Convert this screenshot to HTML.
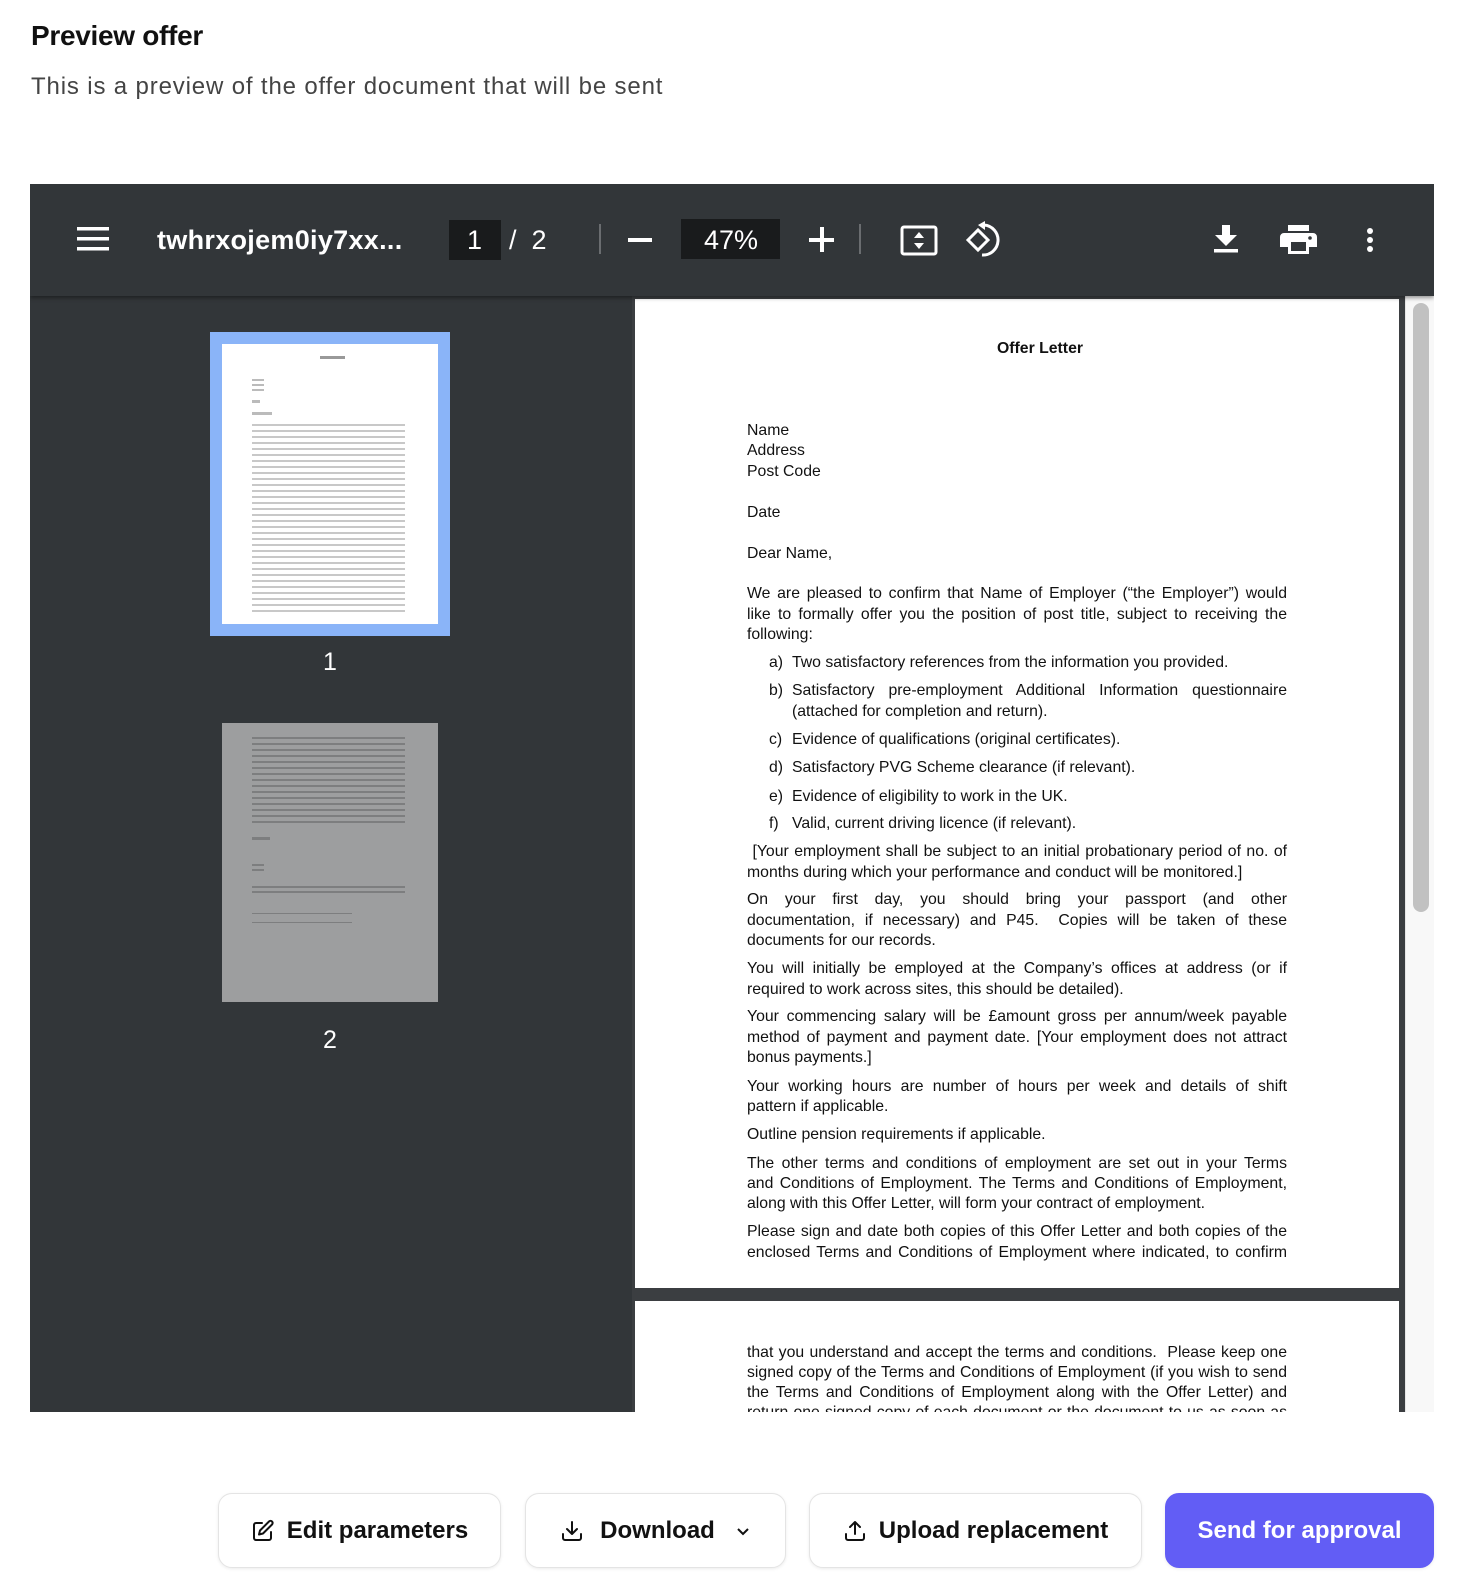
<!DOCTYPE html>
<html><head><meta charset="utf-8">
<style>
*{box-sizing:border-box;margin:0;padding:0}
html,body{width:1468px;height:1584px;background:#fff;overflow:hidden;font-family:"Liberation Sans",Arial,sans-serif}
.abs{position:absolute}
h1{position:absolute;left:31px;top:20px;font-size:28px;font-weight:700;color:#111;letter-spacing:-0.3px}
.sub{position:absolute;left:31px;top:73px;font-size:24px;color:#444;letter-spacing:0.85px}
.viewer{position:absolute;left:30px;top:184px;width:1404px;height:1228px;background:#3b3e41;overflow:hidden}
.tb{position:absolute;left:0;top:0;width:1404px;height:112px;background:#323639;box-shadow:0 2px 4px rgba(0,0,0,.4);z-index:2}
.side{position:absolute;left:0;top:112px;width:602px;height:1116px;background:#323639}
.page{position:absolute;background:#fff}
.t{position:absolute;color:#fff}
.doc{position:absolute;font-size:15.8px;color:#111;line-height:20px;white-space:nowrap}
.j{position:absolute;left:747px;width:540px;font-size:15.8px;line-height:20px;color:#111;text-align:justify;text-align-last:justify;white-space:nowrap}
.j.l{text-align-last:left}
.li{left:792px;width:495px}
.lbl{position:absolute;left:769px;font-size:15.8px;line-height:20px;color:#111}
.btn{position:absolute;top:1493px;height:75px;border:1.5px solid #e4e4e4;border-radius:14px;background:#fff;box-shadow:0 1px 3px rgba(0,0,0,.08);display:flex;align-items:center;justify-content:center;font-size:24px;font-weight:700;color:#111;gap:12px}
.thumbtext{position:absolute;background:repeating-linear-gradient(#fff 0 2px,#c8c8c8 2px 4px,#fff 4px 6px)}
</style></head><body>
<h1>Preview offer</h1>
<div class="sub">This is a preview of the offer document that will be sent</div>

<div class="viewer">
 <div class="tb">
  <svg class="abs" style="left:47px;top:42px" width="32" height="26" viewBox="0 0 32 26"><rect x="0" y="1" width="32" height="3.5" fill="#fff"/><rect x="0" y="11" width="32" height="3.5" fill="#fff"/><rect x="0" y="21" width="32" height="3.5" fill="#fff"/></svg>
  <div class="t" style="left:127px;top:41px;font-size:27px;font-weight:700;letter-spacing:0.3px">twhrxojem0iy7xx...</div>
  <div class="abs" style="left:419px;top:36px;width:52px;height:40px;background:#191b1c"></div>
  <div class="t" style="left:437px;top:41px;font-size:27px">1</div>
  <div class="t" style="left:479px;top:41px;font-size:27px">/&nbsp;&nbsp;2</div>
  <div class="abs" style="left:569px;top:40px;width:1.5px;height:30px;background:#6a6d70"></div>
  <div class="abs" style="left:598px;top:54px;width:24px;height:3.5px;background:#fff"></div>
  <div class="abs" style="left:651px;top:35px;width:99px;height:40px;background:#191b1c"></div>
  <div class="t" style="left:674px;top:41px;font-size:27px">47%</div>
  <div class="abs" style="left:779px;top:54px;width:25px;height:3.5px;background:#fff"></div>
  <div class="abs" style="left:790px;top:43px;width:3.5px;height:25px;background:#fff"></div>
  <div class="abs" style="left:829px;top:40px;width:1.5px;height:30px;background:#6a6d70"></div>
  <svg class="abs" style="left:870px;top:41px" width="38" height="31" viewBox="0 0 38 31"><rect x="2" y="2" width="34" height="27" rx="2" fill="none" stroke="#fff" stroke-width="3"/><path d="M19 7l-5 6h10zM19 24l-5-6h10z" fill="#fff"/></svg>
  <svg class="abs" style="left:934px;top:37px" width="38" height="38" viewBox="0 0 38 38"><path d="M4 19l10-10 10 10-10 10z" fill="none" stroke="#fff" stroke-width="3"/><path d="M20 4a14 14 0 1 1 -2 30" fill="none" stroke="#fff" stroke-width="3"/><path d="M14 4l7-4v9z" fill="#fff"/></svg>
  <svg class="abs" style="left:1184px;top:41px" width="24" height="28" viewBox="0 0 24 28"><path d="M8 0h8v10h7L12 21 1 10h7z" fill="#fff"/><rect x="0" y="24" width="24" height="3.5" fill="#fff"/></svg>
  <svg class="abs" style="left:1250px;top:41px" width="37" height="29" viewBox="0 0 37 29"><rect x="8" y="0" width="21" height="6" fill="#fff"/><path d="M0 12a4 4 0 0 1 4-4h29a4 4 0 0 1 4 4v10h-8v7H8v-7H0z" fill="#fff"/><rect x="11" y="17" width="15" height="9" fill="#323639"/><circle cx="30" cy="13" r="1.8" fill="#323639"/></svg>
  <svg class="abs" style="left:1336px;top:44px" width="8" height="24" viewBox="0 0 8 24"><circle cx="4" cy="3" r="3" fill="#fff"/><circle cx="4" cy="12" r="3" fill="#fff"/><circle cx="4" cy="21" r="3" fill="#fff"/></svg>
 </div>
 <div class="side">
  <div class="abs" style="left:180px;top:36px;width:240px;height:304px;background:#8ab4f8"></div>
  <div class="abs" style="left:192px;top:48px;width:216px;height:280px;background:#fff">
   <div class="abs" style="left:98px;top:12px;width:25px;height:3px;background:#999"></div>
   <div class="abs" style="left:30px;top:34px;width:12px;height:14px;background:repeating-linear-gradient(#fff 0 1px,#bbb 1px 3px,#fff 3px 5px)"></div>
   <div class="abs" style="left:30px;top:56px;width:8px;height:3px;background:#bbb"></div>
   <div class="abs" style="left:30px;top:68px;width:20px;height:3px;background:#bbb"></div>
   <div class="thumbtext" style="left:30px;top:78px;width:153px;height:192px"></div>
  </div>
  <div class="t" style="left:293px;top:352px;font-size:25px">1</div>
  <div class="abs" style="left:192px;top:427px;width:216px;height:279px;background:#9d9e9f">
   <div class="abs" style="left:30px;top:12px;width:153px;height:90px;background:repeating-linear-gradient(#9d9e9f 0 2px,#7d7e7f 2px 4px,#9d9e9f 4px 6px)"></div>
   <div class="abs" style="left:30px;top:114px;width:18px;height:3px;background:#7d7e7f"></div>
   <div class="abs" style="left:30px;top:140px;width:12px;height:8px;background:repeating-linear-gradient(#9d9e9f 0 1px,#7d7e7f 1px 3px,#9d9e9f 3px 5px)"></div>
   <div class="abs" style="left:30px;top:162px;width:153px;height:8px;background:repeating-linear-gradient(#9d9e9f 0 1px,#7d7e7f 1px 3px,#9d9e9f 3px 5px)"></div>
   <div class="abs" style="left:30px;top:186px;width:100px;height:20px;background:repeating-linear-gradient(#9d9e9f 0 4px,#7d7e7f 4px 5px,#9d9e9f 5px 9px)"></div>
  </div>
  <div class="t" style="left:293px;top:730px;font-size:25px">2</div>
 </div>
 <div class="page" style="left:605px;top:115px;width:764px;height:989px"></div>
 <div class="page" style="left:605px;top:1117px;width:764px;height:200px"></div>
 <div class="abs" style="left:1375px;top:112px;width:29px;height:1116px;background:#f8f8f8;border-left:1px solid #e6e6e6"></div>
 <div class="abs" style="left:1383px;top:119px;width:16px;height:609px;background:#c1c1c1;border-radius:8px"></div>
</div>

<div class="doc" style="left:0;width:2080px;text-align:center;top:339px;font-weight:700">Offer Letter</div>
<div class="doc" style="left:747px;top:421px">Name</div>
<div class="doc" style="left:747px;top:441px">Address</div>
<div class="doc" style="left:747px;top:462px">Post Code</div>
<div class="doc" style="left:747px;top:503px">Date</div>
<div class="doc" style="left:747px;top:544px">Dear Name,</div>
<div class="j" style="top:584px">We are pleased to confirm that Name of Employer (“the Employer”) would</div>
<div class="j" style="top:605px">like to formally offer you the position of post title, subject to receiving the</div>
<div class="j l" style="top:625px">following:</div>
<div class="lbl" style="top:653px">a)</div><div class="j l li" style="top:653px">Two satisfactory references from the information you provided.</div>
<div class="lbl" style="top:681px">b)</div><div class="j li" style="top:681px">Satisfactory pre-employment Additional Information questionnaire</div>
<div class="j l li" style="top:702px">(attached for completion and return).</div>
<div class="lbl" style="top:730px">c)</div><div class="j l li" style="top:730px">Evidence of qualifications (original certificates).</div>
<div class="lbl" style="top:758px">d)</div><div class="j l li" style="top:758px">Satisfactory PVG Scheme clearance (if relevant).</div>
<div class="lbl" style="top:787px">e)</div><div class="j l li" style="top:787px">Evidence of eligibility to work in the UK.</div>
<div class="lbl" style="top:814px">f)</div><div class="j l li" style="top:814px">Valid, current driving licence (if relevant).</div>
<div class="j" style="top:842px">&nbsp;[Your employment shall be subject to an initial probationary period of no. of</div>
<div class="j l" style="top:863px">months during which your performance and conduct will be monitored.]</div>
<div class="j" style="top:890px">On your first day, you should bring your passport (and other</div>
<div class="j" style="top:911px">documentation, if necessary) and P45.&nbsp; Copies will be taken of these</div>
<div class="j l" style="top:931px">documents for our records.</div>
<div class="j" style="top:959px">You will initially be employed at the Company’s offices at address (or if</div>
<div class="j l" style="top:980px">required to work across sites, this should be detailed).</div>
<div class="j" style="top:1007px">Your commencing salary will be £amount gross per annum/week payable</div>
<div class="j" style="top:1028px">method of payment and payment date. [Your employment does not attract</div>
<div class="j l" style="top:1048px">bonus payments.]</div>
<div class="j" style="top:1077px">Your working hours are number of hours per week and details of shift</div>
<div class="j l" style="top:1097px">pattern if applicable.</div>
<div class="j l" style="top:1125px">Outline pension requirements if applicable.</div>
<div class="j" style="top:1154px">The other terms and conditions of employment are set out in your Terms</div>
<div class="j" style="top:1174px">and Conditions of Employment. The Terms and Conditions of Employment,</div>
<div class="j l" style="top:1194px">along with this Offer Letter, will form your contract of employment.</div>
<div class="j" style="top:1222px">Please sign and date both copies of this Offer Letter and both copies of the</div>
<div class="j" style="top:1243px">enclosed Terms and Conditions of Employment where indicated, to confirm</div>
<div style="position:absolute;left:0;top:0;width:1468px;height:1412px;overflow:hidden">
<div class="j" style="top:1343px">that you understand and accept the terms and conditions.&nbsp; Please keep one</div>
<div class="j" style="top:1363px">signed copy of the Terms and Conditions of Employment (if you wish to send</div>
<div class="j" style="top:1383px">the Terms and Conditions of Employment along with the Offer Letter) and</div>
<div class="j" style="top:1403px">return one signed copy of each document or the document to us as soon as</div>
</div>

<div class="btn" style="left:218px;width:283px"><svg width="24" height="24" viewBox="0 0 24 24" fill="none" stroke="#111" stroke-width="2" stroke-linecap="round" stroke-linejoin="round"><path d="M11 4H5a2 2 0 0 0-2 2v13a2 2 0 0 0 2 2h13a2 2 0 0 0 2-2v-6"/><path d="M18 2.5a2.1 2.1 0 0 1 3 3L12 14.5l-4 1 1-4z"/></svg>Edit parameters</div>
<div class="btn" style="left:525px;width:261px"><svg width="24" height="24" viewBox="0 0 24 24" fill="none" stroke="#111" stroke-width="2" stroke-linecap="round" stroke-linejoin="round"><path d="M3 15v4a2 2 0 0 0 2 2h14a2 2 0 0 0 2-2v-4"/><path d="M7 10l5 5 5-5M12 15V3"/></svg><span style="margin-left:4px">Download</span><svg style="margin-left:8px" width="16" height="16" viewBox="0 0 16 16" fill="none" stroke="#111" stroke-width="2"><path d="M3 6l5 5 5-5"/></svg></div>
<div class="btn" style="left:809px;width:333px"><svg width="24" height="24" viewBox="0 0 24 24" fill="none" stroke="#111" stroke-width="2" stroke-linecap="round" stroke-linejoin="round"><path d="M3 15v4a2 2 0 0 0 2 2h14a2 2 0 0 0 2-2v-4"/><path d="M17 8l-5-5-5 5M12 3v12"/></svg>Upload replacement</div>
<div class="btn" style="left:1165px;width:269px;background:#625df5;border-color:#625df5;color:#fff">Send for approval</div>
</body></html>
